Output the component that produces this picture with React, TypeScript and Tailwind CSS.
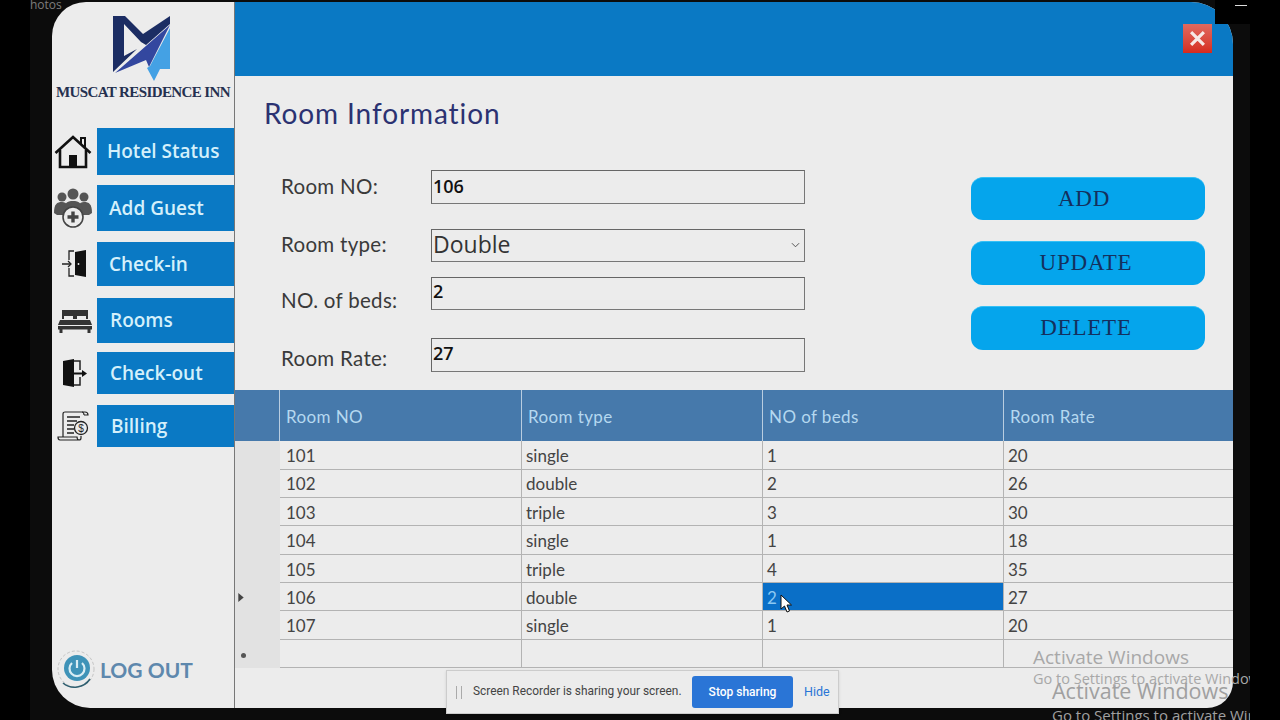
import React from "react";

const rows = [
  ["101", "single", "1", "20"],
  ["102", "double", "2", "26"],
  ["103", "triple", "3", "30"],
  ["104", "single", "1", "18"],
  ["105", "triple", "4", "35"],
  ["106", "double", "2", "27"],
  ["107", "single", "1", "20"],
  ["", "", "", ""],
];

const HomeIcon = () => (
  <svg viewBox="0 0 38 34" className="w-[38px] h-[34px]" fill="none" stroke="#111" strokeWidth="2.6">
    <path d="M1.5 18 L19 2 L36.5 18" />
    <path d="M27 9 V3 H31 V13" strokeWidth="2" />
    <path d="M6 15 V32 H32 V15" />
    <rect x="15" y="20" width="8" height="12" fill="#111" stroke="none" />
  </svg>
);

const GuestIcon = () => (
  <svg viewBox="0 0 38 40" className="w-[38px] h-[40px]" fill="#555">
    <circle cx="19" cy="6" r="5.5" />
    <circle cx="8" cy="9" r="4.5" />
    <circle cx="30" cy="9" r="4.5" />
    <path d="M0 25 C0 16 3 14 8 14 C13 14 15 18 15 27 L3 27 Z" />
    <path d="M38 25 C38 16 35 14 30 14 C25 14 23 18 23 27 L35 27 Z" />
    <path d="M9 26 C9 15 13 13 19 13 C25 13 29 15 29 26 Z" />
    <circle cx="19" cy="29" r="10" fill="#ececec" stroke="#444" strokeWidth="1.6" />
    <path d="M17.3 23.5 H20.7 V27.3 H24.5 V30.7 H20.7 V34.5 H17.3 V30.7 H13.5 V27.3 H17.3 Z" fill="#444" />
  </svg>
);

const CheckInIcon = () => (
  <svg viewBox="0 0 26 28" className="w-[26px] h-[28px]">
    <path d="M12 1 H7 V10 M7 18 V26 H12 M0 14 H8" fill="none" stroke="#222" strokeWidth="1.3" />
    <path d="M6 11 L9 14 L6 17" fill="none" stroke="#222" strokeWidth="1.3" />
    <path d="M13 2 L24 0 V27 L13 25 Z" fill="#111" />
    <circle cx="16.5" cy="14" r="0.9" fill="#eee" />
  </svg>
);

const BedIcon = () => (
  <svg viewBox="0 0 34 24" className="w-[34px] h-[24px]" fill="#333">
    <path d="M4 1 H30 V10 H28 V7 H19 V10 H15 V7 H6 V10 H4 Z" />
    <path d="M2 11 H32 L34 16 H0 Z" />
    <rect x="0" y="17" width="34" height="3.5" />
    <rect x="1.5" y="20" width="3" height="4" />
    <rect x="29.5" y="20" width="3" height="4" />
  </svg>
);

const CheckOutIcon = () => (
  <svg viewBox="0 0 26 28" className="w-[26px] h-[28px]">
    <path d="M1 2 L12 0 V28 L1 26 Z" fill="#111" />
    <path d="M12 2 H18 V11 M18 18 V26 H12" fill="none" stroke="#222" strokeWidth="1.5" />
    <path d="M12 14.5 H22" stroke="#111" strokeWidth="2" />
    <path d="M20 11 L25 14.5 L20 18 Z" fill="#111" />
  </svg>
);

const BillingIcon = () => (
  <svg viewBox="0 0 32 30" className="w-[32px] h-[30px]" fill="none" stroke="#222" strokeWidth="1.2">
    <path d="M6 26 V3 C6 1.5 7 1 8 1 H28 C30 1 31 2 31 4 H27" />
    <path d="M27 4 C27 2 26 1 25 1" />
    <path d="M24 25 V27 C24 28.5 23 29 22 29 H3 C1.5 29 1 28 1 26 H20 C20 27.5 21 29 22 29" />
    <path d="M10 6 H23 M10 10 H20 M10 14 H17 M10 18 H17 M10 22 H17" strokeWidth="1.4" />
    <circle cx="24" cy="17" r="6.5" fill="#ececec" strokeWidth="1.3" />
    <text x="24" y="20.5" textAnchor="middle" fontSize="10" fill="#222" stroke="none" fontFamily="Liberation Sans, sans-serif">$</text>
  </svg>
);

const navItems = [
  { label: "Hotel Status", icon: <HomeIcon />, box: "h-[47px] mb-[10px]", pad: "pl-[10px]", iconPad: "pr-[4px]" },
  { label: "Add Guest", icon: <GuestIcon />, box: "h-[46px] mb-[11px]", pad: "pl-[12px]", iconPad: "pr-[4px]" },
  { label: "Check-in", icon: <CheckInIcon />, box: "h-[44px] mb-[12px]", pad: "pl-[12px]", iconPad: "pl-[1px]" },
  { label: "Rooms", icon: <BedIcon />, box: "h-[45px] mb-[9px]", pad: "pl-[13px]", iconPad: "pl-[1px]" },
  { label: "Check-out", icon: <CheckOutIcon />, box: "h-[42px] mb-[11px]", pad: "pl-[13px]", iconPad: "pl-[1px]" },
  { label: "Billing", icon: <BillingIcon />, box: "h-[42px]", pad: "pl-[14px]", iconPad: "pr-[4px]" },
];

const Logo = () => (
  <svg viewBox="0 0 60 68" className="w-[60px] h-[68px]">
    <path d="M1 1 H13 L31 19 L58 1 V9 L34 30 L29 27 L12 9 V41 L25 34 L1 57 Z" fill="#1c2d63" />
    <path d="M3 58 L58 10 L37 52 L34 45 Z" fill="#33479f" />
    <path d="M58 13 V54 H48 L42 66 L35 53 L38 51 Z" fill="#44a1e4" />
  </svg>
);

const fieldLabel = "w-[150px] text-[20.5px] tracking-[0.3px] text-[#3a3a3a] font-['Lato',sans-serif]";
const fieldBox =
  "w-[374px] border border-[#777] border-t-[#666] border-l-[#666] bg-[#ececec] flex items-center pl-[1px] text-[#111] font-['Open_Sans',sans-serif]";
const actionBtn =
  "w-[234px] rounded-[12px] bg-[#05a5ec] border-t border-[#35c0f5] text-[#14305e] text-[23px] tracking-[0.8px] font-['Liberation_Serif',serif] flex items-center justify-center";
const gridCols = "grid grid-cols-[45px_242px_241px_241px_1fr]";

export default function App() {
  return (
    <div className="relative w-[1280px] h-[720px] bg-[#0c0c0c] flex overflow-hidden">
      <div className="w-[30px] h-full bg-black" />
      <div className="w-[22px] h-full" />

      <div className="w-[1181px] h-[706px] mt-[2px] bg-[#ececec] rounded-tl-[34px] rounded-tr-[42px] rounded-bl-[38px] rounded-br-[26px] overflow-hidden flex">
        {/* sidebar */}
        <div className="w-[183px] h-full flex flex-col border-r border-[#777]">
          <div className="h-[126px] flex flex-col items-center pt-[13px]">
            <div className="mr-[3px]">
              <Logo />
            </div>
            <div className="mt-[-2px] text-[15px] font-bold tracking-[-0.6px] text-[#25304f] whitespace-nowrap font-['Liberation_Serif',serif]">
              MUSCAT RESIDENCE INN
            </div>
          </div>
          <div className="flex flex-col">
            {navItems.map((item) => (
              <div key={item.label} className={`flex ${item.box}`}>
                <div className={`w-[45px] flex items-center justify-center ${item.iconPad}`}>{item.icon}</div>
                <div
                  className={`flex-1 bg-[#0a79c4] flex items-center text-[#d4f0fb] text-[19px] font-semibold font-['Open_Sans',sans-serif] ${item.pad}`}
                >
                  {item.label}
                </div>
              </div>
            ))}
          </div>
          <div className="mt-auto mb-[18px] ml-[5px] flex items-center">
            <svg viewBox="0 0 40 40" className="w-[40px] h-[40px]">
              <circle cx="19" cy="19" r="18" fill="none" stroke="#aaa" strokeWidth="0.6" strokeDasharray="3 2" />
              <path d="M6 33 C14 40 27 38 33 29" fill="none" stroke="#2f5f70" strokeWidth="1.6" />
              <circle cx="20" cy="18" r="13" fill="#3f93b8" />
              <path d="M15 13 A7.5 7.5 0 1 0 25 13" fill="none" stroke="#d9edf4" strokeWidth="2.2" />
              <path d="M20 10 V18" stroke="#d9edf4" strokeWidth="2.2" />
            </svg>
            <span className="ml-[3px] text-[21px] font-bold text-[#5e88ad] font-['Lato',sans-serif]">LOG OUT</span>
          </div>
        </div>

        {/* main */}
        <div className="flex-1 flex flex-col min-w-0">
          <div className="h-[74px] shrink-0 bg-[#0a79c4] flex justify-end items-start pt-[22px] pr-[21px]">
            <div className="w-[29px] h-[29px] bg-gradient-to-b from-[#e0695f] to-[#d62a1e] flex items-center justify-center">
              <svg viewBox="0 0 16 16" className="w-[17px] h-[17px]" stroke="#f6e9e6" strokeWidth="3">
                <path d="M2 2 L14 14 M14 2 L2 14" />
              </svg>
            </div>
          </div>

          {/* form */}
          <div className="h-[314px] shrink-0 flex">
            <div className="w-[736px] shrink-0 pl-[29px]">
              <div className="h-[62px] pt-[17px] text-[28px] leading-[40px] text-[#2b3272] font-['Lato',sans-serif] tracking-[0.9px]">
                Room Information
              </div>
              <div className="pl-[17px] pt-[32px] flex flex-col">
                <div className="flex items-center h-[34px]">
                  <span className={`${fieldLabel} pb-[2px]`}>Room NO:</span>
                  <div className={`${fieldBox} h-[34px] text-[18px] font-semibold pb-[2px]`}>106</div>
                </div>
                <div className="flex items-center h-[33px] mt-[25px]">
                  <span className={`${fieldLabel} pb-[2px]`}>Room type:</span>
                  <div className={`${fieldBox} h-[33px] text-[23px] justify-between text-[#333] pr-[4px] pb-[2px]`}>
                    Double
                    <svg viewBox="0 0 10 6" className="w-[9px] h-[6px]" fill="none" stroke="#444" strokeWidth="1">
                      <path d="M1 1 L5 5 L9 1" />
                    </svg>
                  </div>
                </div>
                <div className="flex items-center h-[33px] mt-[15px]">
                  <span className={`${fieldLabel} pt-[14px]`}>NO. of beds:</span>
                  <div className={`${fieldBox} h-[33px] text-[18px] font-semibold pb-[4px]`}>2</div>
                </div>
                <div className="flex items-center h-[34px] mt-[28px]">
                  <span className={`${fieldLabel} pt-[6px]`}>Room Rate:</span>
                  <div className={`${fieldBox} h-[34px] text-[18px] font-semibold pb-[3px]`}>27</div>
                </div>
              </div>
            </div>
            <div className="pt-[101px] flex flex-col">
              <div className={`${actionBtn} h-[43px] pr-[8px]`}>ADD</div>
              <div className={`${actionBtn} h-[44px] mt-[21px] pr-[4px]`}>UPDATE</div>
              <div className={`${actionBtn} h-[44px] mt-[21px] pr-[4px]`}>DELETE</div>
            </div>
          </div>

          {/* table */}
          <div className="font-['Lato',sans-serif]">
            <div className={`${gridCols} h-[51px] bg-[#4679ab] text-[#b5d8f0] text-[17px] tracking-[0.4px]`}>
              <div className="border-r border-[#b9cde0]" />
              {["Room NO", "Room type", "NO of beds", "Room Rate"].map((h) => (
                <div key={h} className="border-r border-[#b9cde0] last:border-r-0 flex items-center pl-[6px] pt-[2px]">
                  {h}
                </div>
              ))}
            </div>
            {rows.map((r, i) => (
              <div key={i} className={`${gridCols} text-[#444] text-[17px] h-[28.4px]`}>
                <div className="bg-[#e2e2e2] flex items-center pl-[3px]">
                  {i === 5 && (
                    <svg viewBox="0 0 6 10" className="w-[6px] h-[9px]" fill="#444">
                      <path d="M0 0 L6 5 L0 10 Z" />
                    </svg>
                  )}
                  {i === 7 && <span className="block w-[5px] h-[5px] ml-[3px] mt-[3px] rounded-full bg-[#555]" />}
                </div>
                {r.map((c, j) => (
                  <div
                    key={j}
                    className={`border-b border-[#b3b3b3] flex items-center pt-[2px] ${j < 3 ? "border-r" : ""} ${j === 0 ? "pl-[6px]" : "pl-[4px]"} ${
                      i === 5 && j === 2 ? "bg-[#0a6fc7] text-[#8cc8f2] relative" : ""
                    }`}
                  >
                    {c}
                    {i === 5 && j === 2 && (
                      <svg viewBox="0 0 12 19" className="absolute left-[17px] top-[11px] w-[12px] h-[19px]">
                        <path d="M1 1 V15 L4.5 12 L7 18 L9.5 17 L7 11 H11.5 Z" fill="#fff" stroke="#111" strokeWidth="1" />
                      </svg>
                    )}
                  </div>
                ))}
              </div>
            ))}
          </div>
        </div>
      </div>

      <div className="flex-1 h-full flex">
        <div className="w-[17px] h-full" />
        <div className="flex-1 h-full bg-black" />
      </div>

      {/* desktop stuff lying over the window */}
      <div className="absolute left-[30px] top-0 text-[12px] leading-[10px] text-[#7d7d7d] font-['Open_Sans',sans-serif]">hotos</div>
      <div className="absolute left-[1215px] top-0 w-[65px] h-[24px] bg-black">
        <div className="absolute left-[20px] top-[5px] w-[12px] h-[1px] bg-[#ddd]" />
      </div>

      <div className="absolute left-[446px] top-[670px] w-[393px] h-[44px] bg-[#ececec] border border-[#ccc] shadow flex items-center pl-[9px] font-['Roboto',sans-serif]">
        <span className="w-[6px] h-[13px] border-x border-[#aaa]" />
        <span className="ml-[11px] w-[209px] text-[11.9px] text-[#444] whitespace-nowrap">Screen Recorder is sharing your screen.</span>
        <div className="ml-[10px] w-[101px] h-[32px] rounded-[3px] bg-[#2a75d6] text-white text-[12px] font-medium flex items-center justify-center">
          Stop sharing
        </div>
        <span className="ml-[11px] text-[12.5px] text-[#2a75d6]">Hide</span>
      </div>

      <div className="absolute left-[1033px] top-[645px] text-[19px] leading-[24px] text-[#a8a8a8] whitespace-nowrap font-['Open_Sans',sans-serif]">
        Activate Windows
      </div>
      <div className="absolute left-[1033px] top-[669px] w-[217px] overflow-hidden text-[14.5px] leading-[20px] text-[#a8a8a8] whitespace-nowrap font-['Open_Sans',sans-serif]">
        Go to Settings to activate Windows.
      </div>
      <div className="absolute left-[1052px] top-[678px] text-[21.5px] leading-[26px] text-[#a0a0a0] whitespace-nowrap font-['Open_Sans',sans-serif]">
        Activate Windows
      </div>
      <div className="absolute left-[1052px] top-[705px] w-[198px] overflow-hidden text-[15px] leading-[20px] text-[#a0a0a0] whitespace-nowrap font-['Open_Sans',sans-serif]">
        Go to Settings to activate Windows.
      </div>
    </div>
  );
}
